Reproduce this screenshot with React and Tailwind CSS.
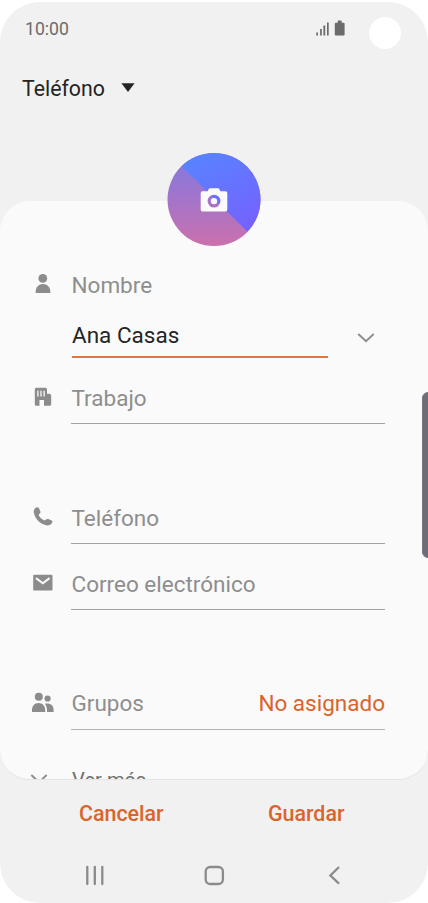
function StatusBar() {
  return (
    <div className="flex h-[54px] items-center pl-[25px] text-[17.6px] text-[#6b6b6b]">
      <span className="flex-1">10:00</span>
      <svg className="mr-[22px] h-[18px] w-[32px]" viewBox="315 19.500 32 18" fill="#6b6b6b">
        <rect x="316.3" y="32" width="1.7" height="3" />
        <rect x="320.1" y="28.5" width="1.7" height="6.5" />
        <rect x="323.4" y="25" width="1.8" height="10" />
        <rect x="327" y="22" width="1.7" height="13" />
        <path d="M335.8 22.2h1.9v-1.5q0-.7.7-.7h2.6q.7 0 .7.7v1.5h1.9q1 0 1 1V34q0 1-1 1h-7.8q-1 0-1-1V23.200q0-1 1-1z" />
      </svg>
      <div className="mr-[27px] mt-2 h-8 w-8 rounded-full bg-white" />
    </div>
  );
}

function Avatar() {
  return (
    <svg className="mx-auto block h-[94px] w-[94px]" viewBox="0 0 94 94">
      <defs>
        <linearGradient id="warm" x1="0" y1="0.1" x2="0" y2="1">
          <stop offset="0" stopColor="#8578df" />
          <stop offset="1" stopColor="#cc70ac" />
        </linearGradient>
        <linearGradient id="cool" x1="0.15" y1="0" x2="0.75" y2="1">
          <stop offset="0" stopColor="#5488ff" />
          <stop offset="1" stopColor="#7a5cff" />
        </linearGradient>
        <clipPath id="disc">
          <circle cx="47" cy="46.500" r="46.500" />
        </clipPath>
      </defs>
      <g clipPath="url(#disc)">
        <rect width="94" height="94" fill="url(#warm)" />
        <path d="M15 13.500 80 78.200 100 98V-5H0z" fill="url(#cool)" />
      </g>
      <path
        fillRule="evenodd"
        fill="#fbfbfb"
        d="M36 38.200h4.700l1-2.200q.4-.8 1.300-.8h8q.9 0 1.300.8l1 2.200H58.500q1.800 0 1.800 1.800v16.700q0 1.800-1.800 1.800h-23q-1.800 0-1.800-1.800V40q0-1.800 1.800-1.800zM47 41.700a6.400 6.400 0 1 0 0 12.800 6.400 6.400 0 0 0 0-12.800z"
      />
      <circle cx="47" cy="48.100" r="3.200" fill="#fbfbfb" />
    </svg>
  );
}

function PersonIcon() {
  return (
    <svg className="h-6 w-6" viewBox="0 0 24 24" fill="#8c8c8c">
      <circle cx="11.800" cy="6.400" r="4.400" />
      <path d="M4.700 21v-1.200c0-4.500 3-7.700 7.300-7.700s7.300 3.200 7.300 7.700V21z" />
    </svg>
  );
}

function BuildingIcon() {
  return (
    <svg className="h-6 w-6" viewBox="0 0 24 24" fill="#8c8c8c">
      <path
        fillRule="evenodd"
        d="M5.200 2.800h9.300q1.500 0 1.500 1.500v4.500h2.200q2 0 2 2v8.500q0 1.500-1.500 1.500H13v-5.800H8.500v5.800H5.200q-1.400 0-1.400-1.400V4.300q0-1.500 1.400-1.500z"
      />
      <path d="M6.900 5.700v5.800M10 5.700v5.800M13.100 5.700v5.800" stroke="#ececec" strokeWidth="1.500" />
    </svg>
  );
}

function PhoneIcon() {
  return (
    <svg className="h-6 w-6" viewBox="0 0 24 24" fill="#8c8c8c">
      <path d="M5.300 2.500Q7 1.700 8 3.200l1.400 3.400q.4 1.300-1.100 2.500c-.8.700-.6 1.200 0 2.100 1.200 1.700 2.500 2.900 4.200 3.700.9.500 1.500.5 2.100-.1 1.200-1.200 2.300-1 3.300-.6l2.700 1.200q1.300.6.700 1.900c-1.500 2.900-4.200 3.800-7 2.800C8.300 18.500 4.200 13.400 2.900 8 2.400 5.500 3.200 3.700 5.300 2.500z" />
    </svg>
  );
}

function MailIcon() {
  return (
    <svg className="h-6 w-6" viewBox="0 0 24 24">
      <rect x="2.200" y="3.700" width="19.300" height="15.900" rx="1.200" fill="#8c8c8c" />
      <path d="m5 7.100 6.800 5.100 6.800-5.100" fill="none" stroke="#fafafa" strokeWidth="2" />
    </svg>
  );
}

function GroupIcon() {
  return (
    <svg className="h-6 w-6" viewBox="0 0 24 24" fill="#8c8c8c">
      <circle cx="7.800" cy="5.700" r="4" />
      <circle cx="16.600" cy="7.500" r="3.100" />
      <path d="M1 21v-2c0-4.200 2.700-7 6.600-7s6.600 2.800 6.600 7v2zM16 21v-2.400q0-3.500-2-5.900c4.800-1.200 8.600 1.400 8.600 6V21z" />
    </svg>
  );
}

function Chevron({ className }) {
  return (
    <svg className={className} viewBox="0 0 18 12" fill="none" stroke="#8c8c8c" strokeWidth="1.900">
      <path d="M1.300 2 9 9.200 16.700 2" />
    </svg>
  );
}

function Field({ icon, label, value, line = "border-[#a2a2a2]", leading = "leading-[50px]" }) {
  return (
    <div className="flex h-[51px]">
      <div className="w-10 shrink-0 pt-3">{icon}</div>
      <div className={`flex flex-1 justify-between border-b pl-[0.5px] ${leading} ${line}`}>
        <span className="text-[#8e8e8e]">{label}</span>
        {value && <span className="text-[#d9642c]">{value}</span>}
      </div>
    </div>
  );
}

export default function App() {
  return (
    <div className="h-[903px] w-[428px] overflow-hidden bg-white pt-[2px] font-[Roboto,sans-serif]">
      <div className="relative flex h-[901px] flex-col overflow-hidden rounded-[40px] bg-[#f1f1f1]">
        <header className="h-[199px] shrink-0">
          <StatusBar />
          <div className="flex h-[66px] items-center pl-[22px] text-[21.300px] text-[#252525]">
            <span className="w-[83px] whitespace-nowrap">Teléfono</span>
            <svg className="mb-1 ml-4 h-[9px] w-[14px]" viewBox="0 0 14 9" fill="#252525">
              <path d="M.4.200h13.200L7 9z" />
            </svg>
          </div>
        </header>

        <main className="h-[579px] shrink-0 rounded-[30px] border-b border-[#e4e4e4] bg-[#fafafa]">
          <div className="-mt-12">
            <Avatar />
          </div>
          <div className="flex h-[532px] flex-col overflow-hidden pl-[31px] pr-[43px] text-[22.500px]">
            <div className="mt-[21px] flex h-[34px]">
              <div className="w-[40.5px] pt-1"><PersonIcon /></div>
              <span className="leading-[34px] text-[#8e8e8e]">Nombre</span>
            </div>
            <div className="mt-[11px] flex h-[45px] pl-[41px]">
              <div className="w-64 border-b-2 border-[#df7840] leading-[45px] text-[#252525]">Ana Casas</div>
              <Chevron className="ml-[29px] mt-[19px] h-3 w-[18px]" />
            </div>
            <div className="mt-[15px]">
              <Field icon={<BuildingIcon />} label="Trabajo" />
            </div>
            <div className="mt-[69px]">
              <Field icon={<PhoneIcon />} label="Teléfono" />
            </div>
            <div className="mt-[15px]">
              <Field icon={<MailIcon />} label="Correo electrónico" />
            </div>
            <div className="mt-[69px]">
              <Field
                icon={<GroupIcon />}
                label="Grupos"
                value="No asignado"
                line="border-[#b4b4b4]"
                leading="leading-[48px]"
              />
            </div>
            <div className="mt-[32px] flex text-[20.200px]">
              <Chevron className="-ml-px mr-6 mt-[11px] h-3 w-[18px]" />
              <span className="leading-[36px] text-[#6f6f6f]">Ver más</span>
            </div>
          </div>
        </main>

        <div className="flex h-[68px] items-center text-[21.400px] font-medium text-[#d9642c]">
          <span className="w-[189px] pl-[79px]">Cancelar</span>
          <span className="pl-[79px]">Guardar</span>
        </div>
        <nav className="flex">
          <svg className="h-[55px] w-full" viewBox="0 848 428 55" fill="none" stroke="#8b8b8b" strokeWidth="2.300">
            <path d="M87.300 867v17M94.800 867v17M102.300 867v17" strokeLinecap="round" />
            <rect x="205.700" y="867" width="17.200" height="17" rx="4.500" />
            <path d="m339 867-8.600 8.500 8.600 8.200" />
          </svg>
        </nav>
        <div className="absolute right-[-6px] top-[390px] h-[166px] w-3 rounded-md border border-[#77777c] bg-[#6e6c7b]" />
      </div>
    </div>
  );
}
